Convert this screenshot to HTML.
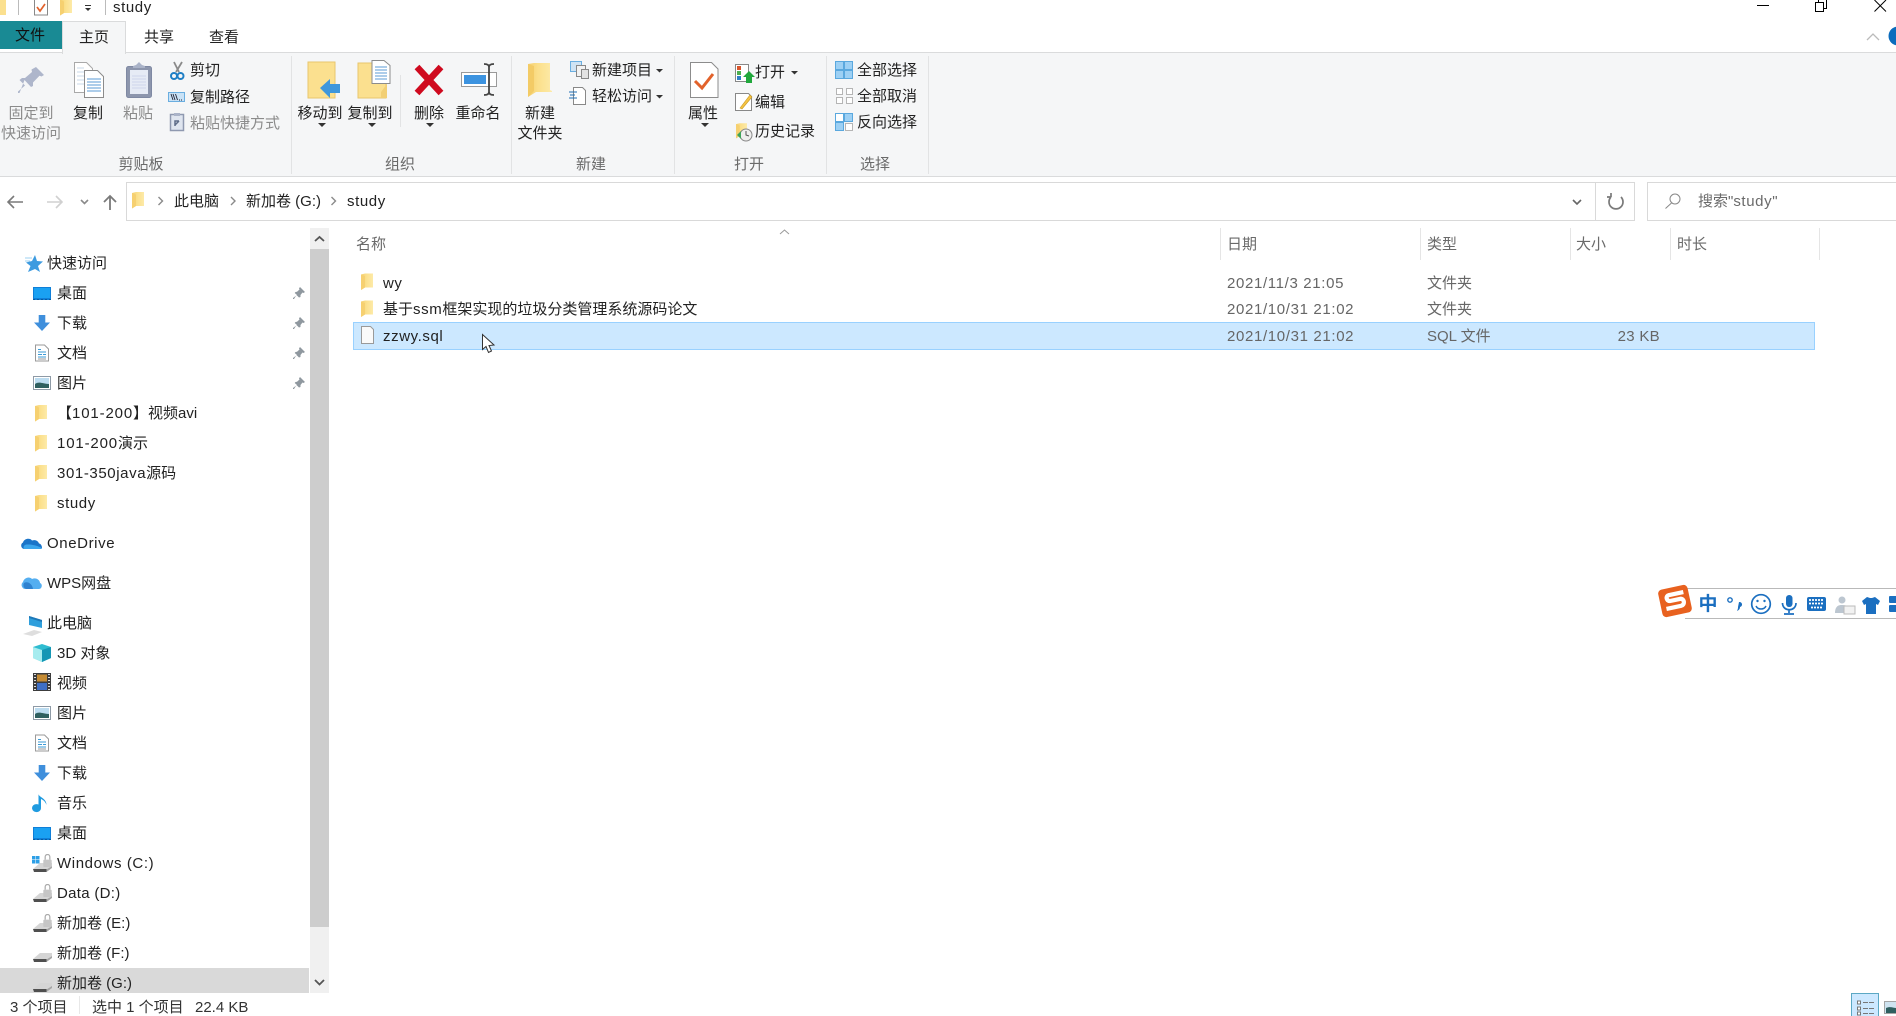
<!DOCTYPE html>
<html lang="zh"><head><meta charset="utf-8"><title>study</title>
<style>
html,body{margin:0;padding:0;background:#fff;width:1896px;height:1016px;overflow:hidden}
body{position:relative;font-family:"Liberation Sans","Noto Sans CJK SC",sans-serif;font-size:15px;color:#222}
.t{position:absolute;line-height:20px;height:20px;white-space:nowrap;transform:translateY(1px)}
.c{text-align:center;width:100px}
.g{color:#8b8b8b}
.l{color:#6a6a6a}
.d{color:#666}
.b{position:absolute}
.e{letter-spacing:.6px}
.n{letter-spacing:.85px}
.dt{letter-spacing:.65px}
svg{position:absolute;left:0;top:0}
</style></head><body>

<!-- backgrounds -->
<div class="b" style="left:0;top:52px;width:1896px;height:125px;background:#f5f6f7;border-top:1px solid #dadbdc;border-bottom:1px solid #dadbdc;box-sizing:border-box"></div>
<div class="b" style="left:0;top:21px;width:62px;height:28px;background:#198a94"></div>
<div class="b" style="left:62px;top:21px;width:64px;height:33px;background:#f5f6f7;border:1px solid #dadbdc;border-bottom:0;box-sizing:border-box"></div>
<div class="b" style="left:291px;top:56px;width:1px;height:118px;background:#e2e3e4"></div>
<div class="b" style="left:511px;top:56px;width:1px;height:118px;background:#e2e3e4"></div>
<div class="b" style="left:674px;top:56px;width:1px;height:118px;background:#e2e3e4"></div>
<div class="b" style="left:826px;top:56px;width:1px;height:118px;background:#e2e3e4"></div>
<div class="b" style="left:928px;top:56px;width:1px;height:118px;background:#e2e3e4"></div>
<div class="b" style="left:400px;top:75px;width:1px;height:52px;background:#e2e3e4"></div>

<!-- address & search -->
<div class="b" style="left:126px;top:182px;width:1509px;height:39px;border:1px solid #d9d9d9;box-sizing:border-box;background:#fff"></div>
<div class="b" style="left:1595px;top:182px;width:1px;height:39px;background:#d9d9d9"></div>
<div class="b" style="left:1647px;top:182px;width:260px;height:39px;border:1px solid #d9d9d9;box-sizing:border-box;background:#fff"></div>

<!-- sidebar selection + scrollbar -->
<div class="b" style="left:0;top:968px;width:309px;height:25px;background:#d9d9d9"></div>
<div class="b" style="left:310px;top:228px;width:19px;height:765px;background:#f0f0f0"></div>
<div class="b" style="left:310px;top:249px;width:19px;height:678px;background:#cdcdcd"></div>

<!-- column separators -->
<div class="b" style="left:1220px;top:228px;width:1px;height:32px;background:#e5e5e5"></div>
<div class="b" style="left:1420px;top:228px;width:1px;height:32px;background:#e5e5e5"></div>
<div class="b" style="left:1570px;top:228px;width:1px;height:32px;background:#e5e5e5"></div>
<div class="b" style="left:1670px;top:228px;width:1px;height:32px;background:#e5e5e5"></div>
<div class="b" style="left:1819px;top:228px;width:1px;height:32px;background:#e5e5e5"></div>

<!-- selected row -->
<div class="b" style="left:353px;top:322px;width:1462px;height:28px;background:#cce8ff;border:1px solid #99d1ff;box-sizing:border-box"></div>

<!-- status view buttons -->
<div class="b" style="left:1851px;top:993px;width:28px;height:23px;background:#cce8ff;border:1px solid #5ba8c4;border-bottom:0;box-sizing:border-box"></div>

<!-- IME bar -->
<div class="b" style="left:1685px;top:588px;width:211px;height:31px;background:#fff;border-top:1px solid #b9b9b9;border-bottom:1px solid #b9b9b9;box-sizing:border-box"></div>

<svg width="1896" height="1016" viewBox="0 0 1896 1016">
<defs>
<linearGradient id="fg" x1="0" x2="1" y1="0" y2="0"><stop offset="0" stop-color="#f4cf6e"/><stop offset=".4" stop-color="#fbdf8a"/><stop offset="1" stop-color="#fdeaa8"/></linearGradient>
<symbol id="fd" viewBox="0 0 12 17" overflow="visible"><path d="M0 1L4 0H12V14H4L0 16.5z" fill="url(#fg)"/><path d="M0 1L4 2.500V14L0 16.500z" fill="#f6d070"/></symbol>
<symbol id="pin" viewBox="0 0 12 13" overflow="visible"><path d="M7 0L12 5 10.500 6 9.500 5.500 7.500 8 7.500 10 6 10.500 3.500 8 1 12 0 12 0 11 4 8 1.700 6 2.500 5 4 4.700 6.500 2.500 6 1.400z" fill="#8f989f"/></symbol>
<symbol id="mon" viewBox="0 0 18 14"><rect width="18" height="13" fill="#0f7fd8"/><rect x="1" y="1" width="16" height="10" fill="#1aa1f2"/><path d="M0 12.500h18" stroke="#0a5a9e" stroke-dasharray="2 2"/></symbol>
<symbol id="dn" viewBox="0 0 17 17"><path d="M5 0h7v8h5L8.500 17 0 8h5z" fill="#3f8fdc"/></symbol>
<symbol id="doc" viewBox="0 0 14 17"><path d="M.5.5h9l4 4v12H.5z" fill="#fff" stroke="#9a9a9a"/><path d="M3 5h3M3 7.500h8M3 10h4M8 10h3M3 12.500h8" stroke="#3b9bd6"/><path d="M3 14.500h8" stroke="#999"/></symbol>
<symbol id="pic" viewBox="0 0 18 14"><rect x=".5" y=".5" width="17" height="13" fill="#fff" stroke="#8e9aa6"/><rect x="2" y="2" width="14" height="10" fill="#bcdcf0"/><path d="M2 8C6 5 10 8 16 8V12H2z" fill="#2f5f5f"/></symbol>
<symbol id="drv" viewBox="0 0 19 13"><path d="M0 9L7 3H19V6L13 10H1z" fill="#d5d5d5"/><path d="M0 9h13.500v3H1z" fill="#4f4f4f"/><path d="M13.500 9.500L19 6V8L13.500 12z" fill="#a5a5a5"/></symbol>
<symbol id="lock" viewBox="0 0 9 14"><path d="M2 6V3a2.500 2.500 0 0 1 5 0V6" fill="none" stroke="#aaa" stroke-width="1.300"/><rect y="6" width="9" height="8" rx="1" fill="#c6c6c6"/></symbol>
</defs>

<!-- QAT -->
<path d="M0 0H6V15H0z" fill="#fbe08f"/><path d="M18.500 0V15" stroke="#bbb"/>
<path d="M34.500 0V15H47.500V0" fill="#fff" stroke="#888"/><path d="M37 7L40 11 45 4" fill="none" stroke="#e2622b" stroke-width="1.700"/>
<use href="#fd" x="60" y="-1" width="12" height="17"/>
<path d="M85 8h6l-3 3z" fill="#333"/><path d="M85 5.500h6" stroke="#333"/>
<path d="M105.500 0V15" stroke="#bbb"/>

<!-- window controls -->
<path d="M1757 5.500h12" stroke="#000"/>
<path d="M1815.500 2.500h8v9h-8zM1818.500 2.500V0M1823.500 8.500h3V0" fill="none" stroke="#000"/>
<path d="M1874.500 0L1886 11.500M1886 0L1874.500 11.500" stroke="#000" fill="none"/>
<path d="M1867 40L1873 34 1879 40" fill="none" stroke="#bbb" stroke-width="1.300"/>
<circle cx="1898" cy="36" r="9.500" fill="#0b6cbd"/>

<!-- pin -->
<g transform="translate(18,67)"><path d="M18 0L26 8 23.500 9.500 21.500 8.800 15 15.500 15 19 13 20 6.500 13 1.500 26 0 26 0 24.500 7 18.500 1.500 13 4 11 7 11 14 5 13.500 2.500z" fill="#aeb6cb"/></g>
<!-- copy -->
<path d="M74.500 62.500h12l6 6v24h-18z" fill="#fff" stroke="#a9a9a9"/><path d="M77 68h7M77 72h12M77 76h12M77 80h12M77 84h12" stroke="#c9d8e8"/>
<path d="M84.500 70.500h13l6 6v21h-19z" fill="#fff" stroke="#8c8c8c"/><path d="M87 79h14M87 82h14M87 85h14M87 88h14M87 91h14" stroke="#5b9bd5"/>
<!-- paste -->
<rect x="126.500" y="66.500" width="25" height="31" rx="2" fill="#8d96ad" stroke="#7f89a3"/><rect x="130" y="70" width="18" height="24" fill="#e6ebf5"/><path d="M132 76h14M132 79h14M132 82h14M132 85h14M132 88h14" stroke="#cdd6ea"/><path d="M133 68h12v-2l-3-1-3-3-3 3-3 1z" fill="#aab3c8"/>
<!-- scissors -->
<path d="M174 62L179 72M182 62L176 72" stroke="#8a8a8a" stroke-width="1.800"/><circle cx="174" cy="76" r="3" fill="none" stroke="#1f7fc5" stroke-width="2"/><circle cx="180.500" cy="76" r="3" fill="none" stroke="#1f7fc5" stroke-width="2"/>
<!-- copy path -->
<rect x="168.500" y="92.500" width="16" height="9" fill="#c9e2f6" stroke="#6aaee0"/><path d="M171 94L173 100M173 94L175 100M175.500 94L177.500 100" stroke="#223" stroke-width=".9"/><path d="M179 100h4" stroke="#223" stroke-dasharray="1 1"/>
<!-- paste shortcut -->
<rect x="170.500" y="114.500" width="13" height="16" fill="#dfe5ef" stroke="#8f99b0" stroke-width="1.500"/><path d="M174 113h6v3h-6z" fill="#aab3c8"/><path d="M175 126V121h4M175 125L179 121" stroke="#5e6c88" stroke-width="1.500" fill="none"/>
<!-- move to -->
<rect x="308" y="62" width="27" height="36" fill="#fbe08f" stroke="#e8c66e"/><path d="M320 88L330 79V84H340V93H330V98z" fill="#3f97dc"/>
<!-- copy to -->
<path d="M358 63h28v35h-28z" fill="#fbe08f" stroke="#e8c66e"/><path d="M381 92v6h6v-14z" fill="#f2cf74"/><path d="M372 60.500h12l6 5v18h-18z" fill="#fff" stroke="#8c8c8c"/><path d="M375 67h12M375 70h12M375 73h12M375 76h12M375 79h12" stroke="#5b9bd5"/>
<!-- delete -->
<path d="M417 67L441 93M441 67L417 93" stroke="#cf0a1f" stroke-width="6.500"/>
<!-- rename -->
<rect x="461.500" y="72.500" width="35" height="14" fill="#fff" stroke="#9a9a9a"/><rect x="464" y="75" width="22" height="9" fill="#3c93e0"/><path d="M484 64c3 0 5 1 5 3V92c0 2 2 3 5 3M494 64c-3 0-5 1-5 3M489 92c0 2-2 3-5 3" fill="none" stroke="#444" stroke-width="1.800"/>
<!-- carets -->
<g fill="#333"><path d="M318 123h8l-4 4z"/><path d="M368 123h8l-4 4z"/><path d="M426 123h8l-4 4z"/><path d="M701 123h8l-4 4z"/><path d="M656 69h7l-3.500 3.500z"/><path d="M656 95h7l-3.500 3.500z"/><path d="M791 71h7l-3.500 3.500z"/></g>
<!-- new folder -->
<path d="M528 64L534 63H550V90L552 91V92H536L528 97z" fill="url(#fg)"/><path d="M528 64L534 66V91L528 97z" fill="#f3cb66"/>
<!-- new item -->
<rect x="570.500" y="61.500" width="11" height="10" fill="#cfe3f3" stroke="#6aaee0"/><rect x="576.500" y="65.500" width="9" height="11" fill="#f2f2f2" stroke="#888"/><rect x="581.500" y="69.500" width="7" height="9" fill="#e3e3e3" stroke="#888"/>
<!-- easy access -->
<path d="M573.500 87.500h9l3 3v14h-12z" fill="#fff" stroke="#888"/><path d="M569 92h8M570 95h5M569 98h8" stroke="#1f6fb5"/>
<!-- properties -->
<path d="M690.500 62.500h21l6.500 6.500v28.500h-27.500z" fill="#fff" stroke="#8c8c8c"/><path d="M695 81L702 88 713 74" fill="none" stroke="#e2622b" stroke-width="3"/>
<!-- open -->
<rect x="735.500" y="64.500" width="13" height="17" fill="#fff" stroke="#888"/><rect x="737" y="66" width="4" height="4" fill="#d9542b"/><rect x="737" y="71" width="4" height="4" fill="#4caf50"/><rect x="737" y="76" width="4" height="4" fill="#2f7fc5"/><path d="M746 83V77H743L749 71 755 77H752V83z" fill="#20a83c"/>
<!-- edit -->
<path d="M735.500 93.500h13l3 3v14h-16z" fill="#fff" stroke="#888"/><path d="M740 108L750 95 752 97 742 109z" fill="#f5c343" stroke="#c79a25" stroke-width=".6"/>
<!-- history -->
<use href="#fd" x="736" y="122" width="11" height="18"/><circle cx="746" cy="135" r="6" fill="#eee" stroke="#888"/><path d="M746 131V135L749 136" stroke="#555" fill="none"/><path d="M737 135l4-4v8z" fill="#3da35a"/>
<!-- select -->
<g stroke="#5aa8de" fill="#9dd0f4"><rect x="835.500" y="61.500" width="8" height="8"/><rect x="844.500" y="61.500" width="8" height="8"/><rect x="835.500" y="70.500" width="8" height="8"/><rect x="844.500" y="70.500" width="8" height="8"/></g>
<g stroke="#b5b5b5" fill="#fff"><rect x="836.500" y="88.500" width="6" height="6"/><rect x="846.500" y="88.500" width="6" height="6"/><rect x="836.500" y="97.500" width="6" height="6"/><rect x="846.500" y="97.500" width="6" height="6"/></g>
<g stroke="#5aa8de" fill="#9dd0f4"><rect x="844.500" y="113.500" width="8" height="8"/><rect x="835.500" y="122.500" width="8" height="8"/></g><g stroke="#5aa8de" fill="#fff"><rect x="835.500" y="113.500" width="8" height="8"/></g><g stroke="#b5b5b5" fill="#fff"><rect x="845.500" y="123.500" width="7" height="7"/></g>

<!-- nav -->
<path d="M23 202H9M14 196L8 202 14 208" fill="none" stroke="#7a7a7a" stroke-width="1.600"/>
<path d="M47 202H61M56 196L62 202 56 208" fill="none" stroke="#d0d0d0" stroke-width="1.600"/>
<path d="M81 200L84.500 203.500 88 200" fill="none" stroke="#8a8a8a" stroke-width="1.600"/>
<path d="M110 210V197M104 202L110 196 116 202" fill="none" stroke="#7a7a7a" stroke-width="1.800"/>
<use href="#fd" x="132" y="192" width="12" height="17"/>
<path d="M158.500 197L162.500 201 158.500 205M231 197L235 201 231 205M331.500 197L335.500 201 331.500 205" fill="none" stroke="#8a8a8a" stroke-width="1.400"/>
<path d="M1573 200L1577 204 1581 200" fill="none" stroke="#666" stroke-width="1.600"/>
<path d="M1611 197A7 7 0 1 0 1621 197M1611 197L1611 193M1611 197L1607 197" fill="none" stroke="#7a7a7a" stroke-width="1.700"/>
<circle cx="1675" cy="199" r="5" fill="none" stroke="#888"/><path d="M1671.500 203L1665.500 208.500" stroke="#888"/>
<path d="M780 234L784.500 230 789 234" fill="none" stroke="#999"/>

<!-- sidebar arrows -->
<path d="M315 241L319.500 237 324 241M315 980L319.500 984.500 324 980" fill="none" stroke="#555" stroke-width="1.800"/>

<!-- sidebar icons -->
<g transform="translate(25,255)"><path d="M10 0L12 6 18 6.500 13 11 15 17 10 14 3 17 5.500 11 1 7.500 7 6z" fill="#3d9be0"/><path d="M0 3h7M0 6h5" stroke="#9ed0f0"/></g>
<use href="#mon" x="33" y="287" width="18" height="14"/>
<use href="#dn" x="34" y="315" width="16" height="16"/>
<use href="#doc" x="35" y="344" width="14" height="18"/>
<use href="#pic" x="33" y="376" width="18" height="14"/>
<use href="#pin" x="293" y="287" width="12" height="13"/>
<use href="#pin" x="293" y="317" width="12" height="13"/>
<use href="#pin" x="293" y="347" width="12" height="13"/>
<use href="#pin" x="293" y="377" width="12" height="13"/>
<use href="#fd" x="35" y="405" width="12" height="17"/>
<use href="#fd" x="35" y="435" width="12" height="17"/>
<use href="#fd" x="35" y="465" width="12" height="17"/>
<use href="#fd" x="35" y="495" width="12" height="17"/>
<path d="M24 549a3.500 3.500 0 0 1-1-6.500c1-4 7-5 9-2 3-1 6 0 7 3 2 0 3 3 3 4a1.500 1.500 0 0 1-1.500 1.500z" fill="#1b74c8"/><path d="M24 549a3 3 0 0 1 3-4.500c3 0 8 0 15 3.500a1.500 1.500 0 0 1-1.500 1z" fill="#3ba5ec"/>
<path d="M26 589a4 4 0 0 1-3-7c1-4 6-6 9-3 4-2 8 1 8 4 3 1 2 6-1 6z" fill="#54aef0"/><path d="M26 589a4 4 0 0 1-2-6c3-2 8 0 9 6z" fill="#2e82d0"/>
<g transform="translate(22,615)"><path d="M7 1L20 5V13L7 10z" fill="#2f9fdc"/><path d="M7 1L20 5V7L7 3z" fill="#1f78b8"/><path d="M1 19L12 15 20 17 10 21z" fill="#dedede"/></g>
<g transform="translate(33,644)"><path d="M9 0L18 3V14L9 18 0 14V3z" fill="#2fbcd0"/><path d="M0 3L9 6V18L0 14z" fill="#a6ecef"/><path d="M9 6L18 3V14L9 18z" fill="#1597b5"/></g>
<g transform="translate(33,673)"><rect width="18" height="18" fill="#3c3c3c"/><rect x="4" y="1.500" width="10" height="7" fill="#c58b33"/><rect x="4" y="10" width="10" height="7" fill="#3f6fc4"/><path d="M1 1.500h2M1 4.500h2M1 7.500h2M1 10.500h2M1 13.500h2M1 16.500h2M15 1.500h2M15 4.500h2M15 7.500h2M15 10.500h2M15 13.500h2M15 16.500h2" stroke="#ddd"/></g>
<use href="#pic" x="33" y="706" width="18" height="14"/>
<use href="#doc" x="35" y="734" width="14" height="18"/>
<use href="#dn" x="34" y="765" width="16" height="16"/>
<path d="M41 794V808A4.500 4 0 1 1 38.500 804.500V794c0 3 8 4 8 11-1-3-3-5-5.500-6z" fill="#1f9be0"/>
<use href="#mon" x="33" y="827" width="18" height="14"/>
<!-- drives -->
<g fill="#2d9fe6"><rect x="32" y="856" width="3.500" height="3.500"/><rect x="36" y="856" width="3.500" height="3.500"/><rect x="32" y="860" width="3.500" height="3.500"/><rect x="36" y="860" width="3.500" height="3.500"/></g>
<use href="#drv" x="33" y="860" width="19" height="13"/><use href="#lock" x="43" y="854" width="9" height="13"/>
<use href="#drv" x="33" y="890" width="19" height="13"/><use href="#lock" x="43" y="884" width="9" height="13"/>
<use href="#drv" x="33" y="920" width="19" height="13"/><use href="#lock" x="43" y="914" width="9" height="13"/>
<use href="#drv" x="33" y="950" width="19" height="13"/>
<use href="#drv" x="33" y="980" width="19" height="13"/>

<!-- list icons -->
<use href="#fd" x="361" y="273" width="12" height="18"/>
<use href="#fd" x="361" y="300" width="12" height="18"/>
<path d="M361.500 326.500h9l3 3v14h-12z" fill="#fafafa" stroke="#9a9a9a"/>
<!-- cursor -->
<path d="M482.500 334.500V349.500L486 346.500 488.500 352.500 491.500 351 489 345.500 494 345z" fill="#fff" stroke="#333"/>

<!-- view buttons icons -->
<g stroke="#777" fill="#fff"><rect x="1857.500" y="1001" width="3" height="3"/><rect x="1857.500" y="1007" width="3" height="3"/><rect x="1857.500" y="1012" width="3" height="3"/></g>
<path d="M1863 1002.500h11M1863 1008.500h11M1863 1013.500h11" stroke="#777" stroke-dasharray="5 1"/>
<rect x="1884.500" y="1001.500" width="15" height="12" fill="#cfe3f0" stroke="#a5a5a5"/><path d="M1886 1008c4-2 8 0 10 0v5h-10z" fill="#2f5f5f"/>

<!-- IME -->
<g transform="rotate(-12 1675 601)"><rect x="1660" y="587" width="30" height="28" rx="4" fill="#e8611f"/><path d="M1685 594h-15c-3 0-4 5 0 6h11c4 1 3 7-1 7h-15" fill="none" stroke="#fff" stroke-width="4.200"/></g>
<circle cx="1730" cy="600" r="2.200" fill="none" stroke="#1b6fc0" stroke-width="1.400"/>
<path d="M1739 602a2.200 2.200 0 1 1 1 5c0 2-1 3-3 4 1-2 1-3 1-4z" fill="#1b6fc0"/>
<circle cx="1761" cy="604" r="9.300" fill="none" stroke="#1b6fc0" stroke-width="1.700"/><circle cx="1757.500" cy="601" r="1.200" fill="#1b6fc0"/><circle cx="1764.500" cy="601" r="1.200" fill="#1b6fc0"/><path d="M1756 606c2 4 8 4 10 0" fill="none" stroke="#1b6fc0" stroke-width="1.500"/>
<rect x="1786" y="595" width="6.500" height="12" rx="3.200" fill="#1b6fc0"/><path d="M1782.500 603c0 9 13.500 9 13.500 0M1789 610v3M1784 614h10" fill="none" stroke="#1b6fc0" stroke-width="1.700"/>
<rect x="1807" y="597" width="19" height="14" rx="2" fill="#1b6fc0"/><path d="M1809 600h15M1809 603.500h15M1811 607.500h11" stroke="#fff" stroke-width="1.700" stroke-dasharray="2 1"/>
<circle cx="1842" cy="600" r="3.500" fill="#bcc6d0"/><path d="M1835 613c0-8 5-8 7-8s6 0 8 4v4z" fill="#bcc6d0"/><rect x="1844" y="606" width="11" height="8" fill="#f2f2f2" stroke="#bbb"/>
<path d="M1867 597l3 1h2l3-1 5 4-2 4-2-1v10h-10v-10l-2 1-2-4z" fill="#1b6fc0"/>
<rect x="1889" y="596" width="9" height="7" rx="1" fill="#1b6fc0"/><rect x="1889" y="605" width="9" height="7" rx="1" fill="#1b6fc0"/>
</svg>

<!-- title + tabs -->
<div class="t e" style="left:113px;top:-3px">study</div>
<div class="t c" style="left:-20px;top:25px;color:#111">文件</div>
<div class="t c" style="left:44px;top:27px">主页</div>
<div class="t c" style="left:109px;top:27px">共享</div>
<div class="t c" style="left:174px;top:27px">查看</div>

<!-- ribbon text -->
<div class="t c g" style="left:-19px;top:103px">固定到</div>
<div class="t c g" style="left:-19px;top:123px">快速访问</div>
<div class="t c" style="left:38px;top:103px">复制</div>
<div class="t c g" style="left:88px;top:103px">粘贴</div>
<div class="t" style="left:190px;top:60px">剪切</div>
<div class="t" style="left:190px;top:87px">复制路径</div>
<div class="t g" style="left:190px;top:113px">粘贴快捷方式</div>
<div class="t c l" style="left:91px;top:154px">剪贴板</div>
<div class="t c" style="left:270px;top:103px">移动到</div>
<div class="t c" style="left:320px;top:103px">复制到</div>
<div class="t c" style="left:379px;top:103px">删除</div>
<div class="t c" style="left:428px;top:103px">重命名</div>
<div class="t c l" style="left:350px;top:154px">组织</div>
<div class="t c" style="left:490px;top:103px">新建</div>
<div class="t c" style="left:490px;top:123px">文件夹</div>
<div class="t" style="left:592px;top:60px">新建项目</div>
<div class="t" style="left:592px;top:86px">轻松访问</div>
<div class="t c l" style="left:541px;top:154px">新建</div>
<div class="t c" style="left:653px;top:103px">属性</div>
<div class="t" style="left:755px;top:62px">打开</div>
<div class="t" style="left:755px;top:92px">编辑</div>
<div class="t" style="left:755px;top:121px">历史记录</div>
<div class="t c l" style="left:699px;top:154px">打开</div>
<div class="t" style="left:857px;top:60px">全部选择</div>
<div class="t" style="left:857px;top:86px">全部取消</div>
<div class="t" style="left:857px;top:112px">反向选择</div>
<div class="t c l" style="left:825px;top:154px">选择</div>

<!-- address text -->
<div class="t" style="left:174px;top:191px">此电脑</div>
<div class="t" style="left:246px;top:191px">新加卷 (G:)</div>
<div class="t e" style="left:347px;top:191px">study</div>
<div class="t l" style="left:1698px;top:191px">搜索"<span class="e">study</span>"</div>

<!-- headers -->
<div class="t l" style="left:356px;top:234px">名称</div>
<div class="t l" style="left:1227px;top:234px">日期</div>
<div class="t l" style="left:1427px;top:234px">类型</div>
<div class="t l" style="left:1576px;top:234px">大小</div>
<div class="t l" style="left:1677px;top:234px">时长</div>

<!-- rows -->
<div class="t e" style="left:383px;top:273px">wy</div>
<div class="t d dt" style="left:1227px;top:273px">2021/11/3 21:05</div>
<div class="t d" style="left:1427px;top:273px">文件夹</div>
<div class="t" style="left:383px;top:299px">基于<span class="e">ssm</span>框架实现的垃圾分类管理系统源码论文</div>
<div class="t d dt" style="left:1227px;top:299px">2021/10/31 21:02</div>
<div class="t d" style="left:1427px;top:299px">文件夹</div>
<div class="t e" style="left:383px;top:326px">zzwy.sql</div>
<div class="t d dt" style="left:1227px;top:326px">2021/10/31 21:02</div>
<div class="t d" style="left:1427px;top:326px">SQL 文件</div>
<div class="t d" style="left:1560px;top:326px;width:100px;text-align:right;letter-spacing:.3px">23 KB</div>

<!-- sidebar text -->
<div class="t" style="left:47px;top:253px">快速访问</div>
<div class="t" style="left:57px;top:283px">桌面</div>
<div class="t" style="left:57px;top:313px">下载</div>
<div class="t" style="left:57px;top:343px">文档</div>
<div class="t" style="left:57px;top:373px">图片</div>
<div class="t" style="left:57px;top:403px">【<span class="n">101-200</span>】视频avi</div>
<div class="t" style="left:57px;top:433px"><span class="n">101-200</span>演示</div>
<div class="t" style="left:57px;top:463px"><span style="letter-spacing:.6px">301-350java</span>源码</div>
<div class="t e" style="left:57px;top:493px">study</div>
<div class="t e" style="left:47px;top:533px">OneDrive</div>
<div class="t" style="left:47px;top:573px">WPS网盘</div>
<div class="t" style="left:47px;top:613px">此电脑</div>
<div class="t" style="left:57px;top:643px">3D 对象</div>
<div class="t" style="left:57px;top:673px">视频</div>
<div class="t" style="left:57px;top:703px">图片</div>
<div class="t" style="left:57px;top:733px">文档</div>
<div class="t" style="left:57px;top:763px">下载</div>
<div class="t" style="left:57px;top:793px">音乐</div>
<div class="t" style="left:57px;top:823px">桌面</div>
<div class="t e" style="left:57px;top:853px">Windows (C:)</div>
<div class="t" style="left:57px;top:883px;letter-spacing:.3px">Data (D:)</div>
<div class="t" style="left:57px;top:913px">新加卷 (E:)</div>
<div class="t" style="left:57px;top:943px">新加卷 (F:)</div>
<div class="t" style="left:57px;top:973px">新加卷 (G:)</div>

<!-- status -->
<div class="t" style="left:10px;top:997px;color:#333">3 个项目</div>
<div class="b" style="left:79px;top:996px;width:1px;height:18px;background:#e8e8e8"></div>
<div class="t" style="left:92px;top:997px;color:#333">选中 1 个项目</div>
<div class="t" style="left:195px;top:997px;color:#333">22.4 KB</div>

<!-- IME text -->
<div class="t" style="left:1658px;top:594px;width:100px;text-align:center;color:#1b6fc0;font-weight:bold;font-size:19px">中</div>

</body></html>
